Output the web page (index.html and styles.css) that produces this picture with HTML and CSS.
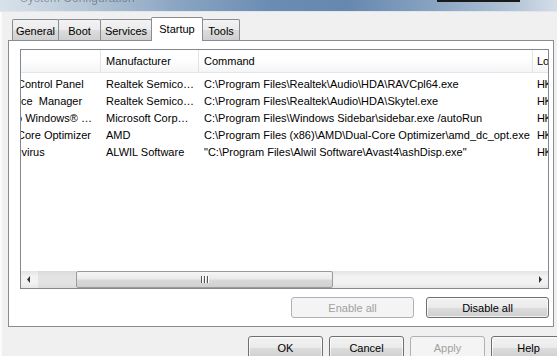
FILE: index.html
```html
<!DOCTYPE html>
<html>
<head>
<meta charset="utf-8">
<link rel="stylesheet" href="styles.css">
</head>
<body>
<div class="titlebar">
  <span class="title">System Configuration</span>
  <span class="spacer"></span>
  <span class="caption"></span>
</div>
<div class="client">
  <div class="tabs">
    <div class="tab t-general">General</div>
    <div class="tab t-boot">Boot</div>
    <div class="tab t-services">Services</div>
    <div class="tab t-startup active">Startup</div>
    <div class="tab t-tools">Tools</div>
  </div>
  <div class="panel">
    <div class="list">
      <div class="header">
        <div class="hcell c1"></div>
        <div class="hcell c2">Manufacturer</div>
        <div class="hcell c3">Command</div>
        <div class="hcell c4">Lo</div>
      </div>
      <div class="rows">
        <div class="row"><div class="cell c1"><span class="cut r1">Control Panel</span></div><div class="cell c2">Realtek Semico…</div><div class="cell c3">C:\Program Files\Realtek\Audio\HDA\RAVCpl64.exe</div><div class="cell c4">HK</div></div>
        <div class="row"><div class="cell c1"><span class="cut r2">ce&nbsp; Manager</span></div><div class="cell c2">Realtek Semico…</div><div class="cell c3">C:\Program Files\Realtek\Audio\HDA\Skytel.exe</div><div class="cell c4">HK</div></div>
        <div class="row"><div class="cell c1"><span class="cut r3">o Windows® …</span></div><div class="cell c2">Microsoft Corp…</div><div class="cell c3">C:\Program Files\Windows Sidebar\sidebar.exe /autoRun</div><div class="cell c4">HK</div></div>
        <div class="row"><div class="cell c1"><span class="cut r4">Core Optimizer</span></div><div class="cell c2">AMD</div><div class="cell c3">C:\Program Files (x86)\AMD\Dual-Core Optimizer\amd_dc_opt.exe</div><div class="cell c4">HK</div></div>
        <div class="row"><div class="cell c1"><span class="cut r5">ivirus</span></div><div class="cell c2">ALWIL Software</div><div class="cell c3">"C:\Program Files\Alwil Software\Avast4\ashDisp.exe"</div><div class="cell c4">HK</div></div>
      </div>
      <div class="hscroll">
        <div class="arrow">
          <svg width="17" height="17" viewBox="0 0 17 17"><path d="M9 5 L6 8.5 L9 12 Z" fill="#333"/></svg>
        </div>
        <div class="track-pre"></div>
        <div class="thumb"><span class="grip"></span><span class="grip"></span><span class="grip"></span></div>
        <div class="track-post"></div>
        <div class="arrow">
          <svg width="17" height="17" viewBox="0 0 17 17"><path d="M8 5 L11 8.5 L8 12 Z" fill="#333"/></svg>
        </div>
      </div>
    </div>
    <div class="panel-buttons">
      <button class="btn wide disabled">Enable all</button>
      <button class="btn wide">Disable all</button>
    </div>
  </div>
  <div class="dialog-buttons">
    <button class="btn">OK</button>
    <button class="btn">Cancel</button>
    <button class="btn disabled">Apply</button>
    <button class="btn">Help</button>
  </div>
</div>
</body>
</html>
```
FILE: styles.css
```css
* { box-sizing: border-box; }
html, body {
  margin: 0;
  padding: 0;
}
body {
  width: 557px;
  height: 356px;
  overflow: hidden;
  background: #f0f0f0;
  font-family: "Liberation Sans", Arial, sans-serif;
  font-size: 11px;
  color: #000;
}
.titlebar {
  height: 12px;
  display: flex;
  align-items: flex-end;
  overflow: hidden;
  background: linear-gradient(to right, #d9e2ea 0%, #b9c9d8 14%, #8aa5c2 32%, #6c8db3 48%, #6687ae 62%, #89a4c2 78%, #b3c4d6 92%, #d4dee8 100%);
  border-bottom: 1px solid #dfe6ee;
}
.title {
  margin-left: 20px;
  margin-bottom: 8px;
  font-size: 12px;
  color: #2a3440;
  line-height: 10px;
  opacity: 0.4;
  filter: blur(0.7px);
}
.spacer { flex: 1; }
.caption {
  align-self: flex-start;
  width: 83px;
  height: 2px;
  margin-right: 37px;
  background: #1a1a1a;
}
.client {
  padding: 5px 3px 0 6px;
  border-left: 2px solid #fbfbfb;
}
.tabs {
  display: flex;
  align-items: flex-end;
  height: 23px;
  padding-left: 4px;
  position: relative;
  z-index: 1;
}
.tab {
  height: 21px;
  border: 1px solid #898c95;
  border-bottom: none;
  border-radius: 2px 2px 0 0;
  background: linear-gradient(#f3f3f3 0%, #ebebeb 50%, #dddddd 51%, #cfcfcf 100%);
  display: flex;
  align-items: center;
  justify-content: center;
  margin-right: -1px;
  padding-top: 1px;
}
.t-general { width: 47px; }
.t-boot { width: 43px; }
.t-services { width: 52px; }
.t-startup { width: 52px; }
.t-tools { width: 38px; }
.tab.active {
  height: 24px;
  margin-bottom: -1px;
  background: #fff;
  padding-bottom: 3px;
  position: relative;
  z-index: 2;
}
.panel {
  width: 546px;
  height: 287px;
  border: 1px solid #898c95;
  background: #fff;
  padding: 8px 5px 0 11px;
  display: flex;
  flex-direction: column;
}
.list {
  width: 529px;
  height: 240px;
  border: 1px solid #828790;
  background: #fff;
  display: flex;
  flex-direction: column;
  overflow: hidden;
}
.header {
  display: flex;
  height: 23px;
  flex: none;
  background: linear-gradient(#ffffff 0%, #ffffff 40%, #f4f5f7 100%);
  border-bottom: 1px solid #e5e5e5;
}
.hcell {
  display: flex;
  align-items: center;
  padding-left: 5px;
  border-right: 1px solid #e3e4e6;
  white-space: nowrap;
  overflow: hidden;
}
.c1 { width: 80px; flex: none; }
.c2 { width: 98px; flex: none; }
.c3 { width: 334px; flex: none; }
.c4 { flex: 1; border-right: none; }
.hcell.c4, .cell.c4 { padding-left: 4px; }
.rows {
  flex: 1;
  padding-top: 2px;
}
.row {
  display: flex;
  height: 17px;
  align-items: center;
}
.cell {
  white-space: nowrap;
  overflow: hidden;
  padding-left: 5px;
}
.cell.c1 { padding-left: 0; }
.cell.c4 { overflow: visible; letter-spacing: -0.5px; }
.cut { display: inline-block; }
.r1 { margin-left: -4px; }
.r2 { margin-left: 0px; }
.r3 { margin-left: -5px; }
.r4 { margin-left: -4px; }
.r5 { margin-left: -2px; }
.hscroll {
  height: 17px;
  flex: none;
  display: flex;
  background: linear-gradient(#e3e3e3, #f2f2f2 30%, #f2f2f2 70%, #e6e6e6);
}
.arrow {
  width: 17px;
  height: 17px;
  flex: none;
}
.track-pre { width: 38px; flex: none; background: rgba(200,200,200,0.35); }
.thumb {
  width: 257px;
  flex: none;
  border: 1px solid #9b9b9b;
  border-radius: 2px;
  background: linear-gradient(#f5f5f5 0%, #ebebeb 45%, #d9d9d9 55%, #d0d0d0 100%);
  display: flex;
  justify-content: center;
  align-items: center;
  gap: 2px;
}
.grip {
  width: 1px;
  height: 7px;
  background: #555;
  box-shadow: 1px 0 0 #fff;
}
.track-post { flex: 1; }
.panel-buttons {
  display: flex;
  justify-content: flex-end;
  gap: 12px;
  margin-top: 8px;
  width: 529px;
}
.btn {
  font-family: inherit;
  font-size: 11px;
  color: #000;
  height: 21px;
  width: 75px;
  border: 1px solid #707070;
  border-radius: 3px;
  background: linear-gradient(#f2f2f2 0%, #ebebeb 50%, #dddddd 51%, #cfcfcf 100%);
  box-shadow: inset 0 0 0 1px rgba(255,255,255,0.7);
  padding: 0;
  margin: 0;
}
.btn.wide { width: 123px; }
.btn.disabled {
  color: #a0a0a0;
  border-color: #adb2b5;
  background: #f4f4f4;
  box-shadow: none;
}
.dialog-buttons {
  display: flex;
  gap: 6px;
  margin-top: 9px;
  padding-left: 240px;
}
.dialog-buttons .btn { height: 23px; flex: none; }
```
